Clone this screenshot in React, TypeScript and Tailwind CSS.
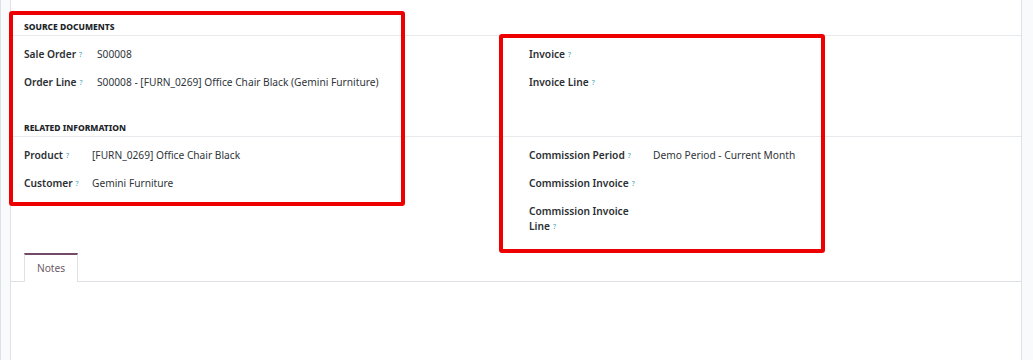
import React from "react";

const Help = () => (
  <sup className="ml-[3px] text-[7px] leading-none font-normal text-[#3f9fb5] relative top-[-1px]">?</sup>
);

const Field = ({ label, value, labelW }: { label: string; value?: string; labelW: string }) => (
  <div className="flex py-[6.5px] leading-[15px]">
    <div className={`${labelW} shrink-0 font-semibold text-[#2b2f33]`}>
      {label}
      <Help />
    </div>
    <div className="text-[#30353a]">{value}</div>
  </div>
);

const App = () => {
  return (
    <div
      className="relative w-[1033px] h-[360px] overflow-hidden bg-white flex text-[10.2px]"
      style={{ fontFamily: "'Noto Sans', 'Open Sans', sans-serif" }}
    >
      <div className="w-[11px] shrink-0 bg-[#f9fafb] border-l border-[#dee2e6] border-r" />
      <div className="flex-1 flex flex-col">
        <div className="grid grid-cols-2 border-b border-[#e7e9ed] h-[36px]">
          <div className="px-[13px] flex items-end pb-[2px]">
            <span className="text-[8.5px] leading-[12px] font-extrabold uppercase text-[#212529]">
              Source Documents
            </span>
          </div>
          <div />
        </div>
        <div className="grid grid-cols-2 pt-[4px]">
          <div className="px-[13px]">
            <Field label="Sale Order" value="S00008" labelW="w-[73px]" />
            <Field
              label="Order Line"
              value="S00008 - [FURN_0269] Office Chair Black (Gemini Furniture)"
              labelW="w-[73px]"
            />
          </div>
          <div className="px-[13px]">
            <Field label="Invoice" labelW="w-[124px]" />
            <Field label="Invoice Line" labelW="w-[124px]" />
          </div>
        </div>
        <div className="grid grid-cols-2 border-b border-[#e7e9ed] h-[41px]">
          <div className="px-[13px] flex items-end pb-[2px]">
            <span className="text-[8.5px] leading-[12px] font-extrabold uppercase text-[#212529]">
              Related Information
            </span>
          </div>
          <div />
        </div>
        <div className="grid grid-cols-2 pt-[4px]">
          <div className="px-[13px]">
            <Field label="Product" value="[FURN_0269] Office Chair Black" labelW="w-[68px]" />
            <Field label="Customer" value="Gemini Furniture" labelW="w-[68px]" />
          </div>
          <div className="px-[13px]">
            <Field label="Commission Period" value="Demo Period - Current Month" labelW="w-[124px]" />
            <Field label="Commission Invoice" labelW="w-[124px]" />
            <div className="flex flex-col py-[6.5px] leading-[15px] font-semibold text-[#2b2f33]">
              <span>Commission Invoice</span>
              <span>
                Line
                <Help />
              </span>
            </div>
          </div>
        </div>
        <div className="mt-[13px] flex border-b border-[#dee2e6] pl-[13px]">
          <div className="h-[29px] w-[54px] border-t-2 border-t-[#714b67] border-x border-x-[#dee2e6] flex items-center justify-center text-[#6c5a67] -mb-px bg-white">
            Notes
          </div>
        </div>
        <div className="flex-1" />
      </div>
      <div className="w-[12px] shrink-0 bg-[#f9fafb] border-l border-[#dee2e6]" />

      <div className="absolute left-[9px] top-[11px] w-[396px] h-[195px] border-[4px] border-[#ee0000] rounded-[3px] pointer-events-none" />
      <div className="absolute left-[499px] top-[34px] w-[326px] h-[219px] border-[4px] border-[#ee0000] rounded-[3px] pointer-events-none" />
    </div>
  );
};

export default App;
